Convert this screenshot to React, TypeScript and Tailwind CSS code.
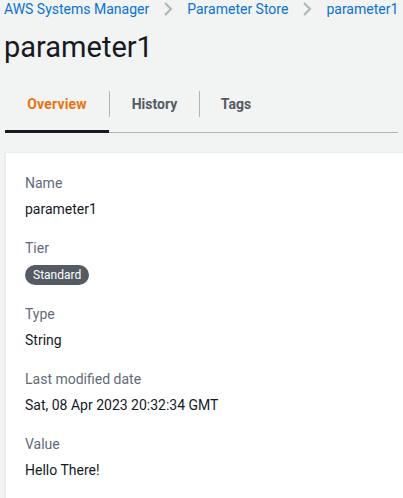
import React from "react";

const font = { fontFamily: "Roboto, 'Noto Sans', Arial, sans-serif" };

function Chevron() {
  return (
    <svg width="10" height="16" viewBox="0 0 10 16" className="shrink-0">
      <path d="M2 2 L8 8 L2 14" fill="none" stroke="#aab7b8" strokeWidth="2" />
    </svg>
  );
}

function Field({ label, children }: { label: string; children: React.ReactNode }) {
  return (
    <div className="flex flex-col">
      <div className="text-[14px] leading-[20px] text-[#5f6b7a]">{label}</div>
      <div className="mt-[6px] text-[14px] leading-[20px] text-[#16191f]">{children}</div>
    </div>
  );
}

export default function App() {
  return (
    <div className="w-[403px] h-[498px] overflow-hidden bg-[#f2f3f3]" style={font}>
      <div className="flex items-center h-[18px] pl-[4px] text-[14px] text-[#0972d3]">
        <span className="whitespace-nowrap">AWS Systems Manager</span>
        <span className="mx-[14px] flex"><Chevron /></span>
        <span className="whitespace-nowrap">Parameter Store</span>
        <span className="mx-[14px] flex"><Chevron /></span>
        <span className="whitespace-nowrap">parameter1</span>
      </div>
      <h1 className="mt-[11px] pl-[4px] text-[29px] leading-[36px] text-[#16191f] font-normal">parameter1</h1>
      <div className="mt-[11px] mx-[5px] flex border-b border-[#aab7b8] h-[57px]">
        <div className="relative flex items-center justify-center w-[104px] text-[14px] font-bold text-[#ec7211] tracking-[0.2px]">
          Overview
          <div className="absolute left-0 right-0 bottom-[-1px] h-[3px] bg-[#16191f]" />
        </div>
        <div className="my-[15px] w-px bg-[#aab7b8]" />
        <div className="flex items-center justify-center w-[89px] text-[14px] font-bold text-[#545b64]">History</div>
        <div className="my-[15px] w-px bg-[#aab7b8]" />
        <div className="flex items-center justify-center w-[72px] text-[14px] font-bold text-[#545b64]">Tags</div>
      </div>
      <div className="mt-[19px] ml-[4px] bg-white border-l-[2px] border-t border-[#eaeded] h-[400px] pl-[19px] pt-[20px] flex flex-col gap-[19px]">
        <Field label="Name">parameter1</Field>
        <Field label="Tier">
          <span className="inline-flex items-center h-[20px] px-[8px] rounded-full bg-[#545b64] text-white text-[12px] leading-none">Standard</span>
        </Field>
        <Field label="Type">String</Field>
        <Field label="Last modified date">Sat, 08 Apr 2023 20:32:34 GMT</Field>
        <Field label="Value">Hello There!</Field>
      </div>
    </div>
  );
}
